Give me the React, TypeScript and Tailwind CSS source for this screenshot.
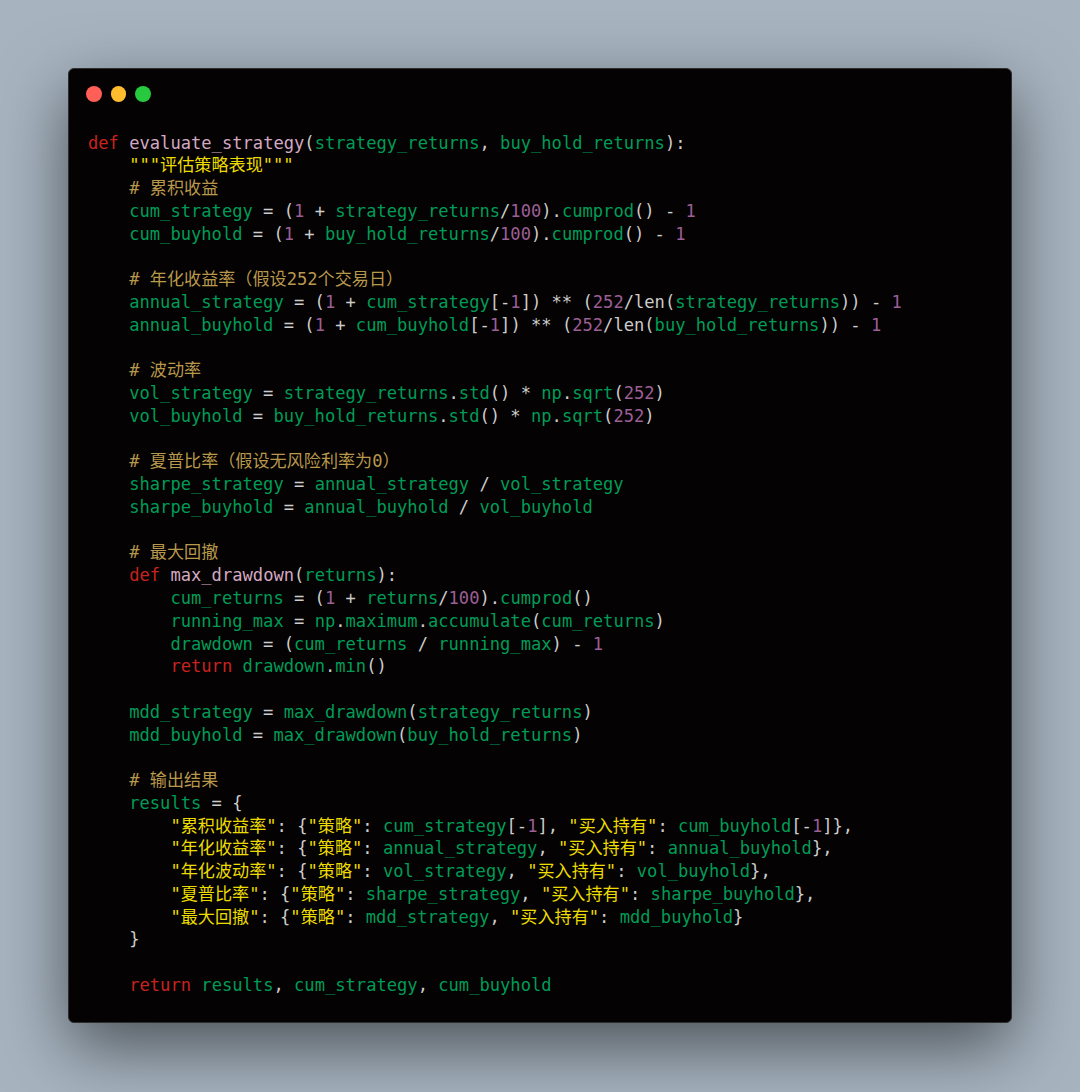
type K = "k" | "f" | "g" | "n" | "c" | "s" | "p";
type Tok = [K, string];

const cls: Record<K, string> = {
  k: "text-[#c8221f]",
  f: "text-[#d4a9c2]",
  g: "text-[#009c57]",
  n: "text-[#9c5f96]",
  c: "text-[#b8984c]",
  s: "text-[#ecdc00]",
  p: "text-[#cccccc]",
};

const lines: Tok[][] = [
  [["k","def"],["p"," "],["f","evaluate_strategy"],["p","("],["g","strategy_returns"],["p",", "],["g","buy_hold_returns"],["p","):"]],
  [["p","    "],["s","\"\"\"评估策略表现\"\"\""]],
  [["p","    "],["c","# 累积收益"]],
  [["p","    "],["g","cum_strategy"],["p"," = ("],["n","1"],["p"," + "],["g","strategy_returns"],["p","/"],["n","100"],["p",")."],["g","cumprod"],["p","() - "],["n","1"]],
  [["p","    "],["g","cum_buyhold"],["p"," = ("],["n","1"],["p"," + "],["g","buy_hold_returns"],["p","/"],["n","100"],["p",")."],["g","cumprod"],["p","() - "],["n","1"]],
  [],
  [["p","    "],["c","# 年化收益率（假设252个交易日）"]],
  [["p","    "],["g","annual_strategy"],["p"," = ("],["n","1"],["p"," + "],["g","cum_strategy"],["p","[-"],["n","1"],["p","]) ** ("],["n","252"],["p","/len("],["g","strategy_returns"],["p",")) - "],["n","1"]],
  [["p","    "],["g","annual_buyhold"],["p"," = ("],["n","1"],["p"," + "],["g","cum_buyhold"],["p","[-"],["n","1"],["p","]) ** ("],["n","252"],["p","/len("],["g","buy_hold_returns"],["p",")) - "],["n","1"]],
  [],
  [["p","    "],["c","# 波动率"]],
  [["p","    "],["g","vol_strategy"],["p"," = "],["g","strategy_returns"],["p","."],["g","std"],["p","() * "],["g","np"],["p","."],["g","sqrt"],["p","("],["n","252"],["p",")"]],
  [["p","    "],["g","vol_buyhold"],["p"," = "],["g","buy_hold_returns"],["p","."],["g","std"],["p","() * "],["g","np"],["p","."],["g","sqrt"],["p","("],["n","252"],["p",")"]],
  [],
  [["p","    "],["c","# 夏普比率（假设无风险利率为0）"]],
  [["p","    "],["g","sharpe_strategy"],["p"," = "],["g","annual_strategy"],["p"," / "],["g","vol_strategy"]],
  [["p","    "],["g","sharpe_buyhold"],["p"," = "],["g","annual_buyhold"],["p"," / "],["g","vol_buyhold"]],
  [],
  [["p","    "],["c","# 最大回撤"]],
  [["p","    "],["k","def"],["p"," "],["f","max_drawdown"],["p","("],["g","returns"],["p","):"]],
  [["p","        "],["g","cum_returns"],["p"," = ("],["n","1"],["p"," + "],["g","returns"],["p","/"],["n","100"],["p",")."],["g","cumprod"],["p","()"]],
  [["p","        "],["g","running_max"],["p"," = "],["g","np"],["p","."],["g","maximum"],["p","."],["g","accumulate"],["p","("],["g","cum_returns"],["p",")"]],
  [["p","        "],["g","drawdown"],["p"," = ("],["g","cum_returns"],["p"," / "],["g","running_max"],["p",") - "],["n","1"]],
  [["p","        "],["k","return"],["p"," "],["g","drawdown"],["p","."],["g","min"],["p","()"]],
  [],
  [["p","    "],["g","mdd_strategy"],["p"," = "],["g","max_drawdown"],["p","("],["g","strategy_returns"],["p",")"]],
  [["p","    "],["g","mdd_buyhold"],["p"," = "],["g","max_drawdown"],["p","("],["g","buy_hold_returns"],["p",")"]],
  [],
  [["p","    "],["c","# 输出结果"]],
  [["p","    "],["g","results"],["p"," = {"]],
  [["p","        "],["s","\"累积收益率\""],["p",": {"],["s","\"策略\""],["p",": "],["g","cum_strategy"],["p","[-"],["n","1"],["p","], "],["s","\"买入持有\""],["p",": "],["g","cum_buyhold"],["p","[-"],["n","1"],["p","]},"]],
  [["p","        "],["s","\"年化收益率\""],["p",": {"],["s","\"策略\""],["p",": "],["g","annual_strategy"],["p",", "],["s","\"买入持有\""],["p",": "],["g","annual_buyhold"],["p","},"]],
  [["p","        "],["s","\"年化波动率\""],["p",": {"],["s","\"策略\""],["p",": "],["g","vol_strategy"],["p",", "],["s","\"买入持有\""],["p",": "],["g","vol_buyhold"],["p","},"]],
  [["p","        "],["s","\"夏普比率\""],["p",": {"],["s","\"策略\""],["p",": "],["g","sharpe_strategy"],["p",", "],["s","\"买入持有\""],["p",": "],["g","sharpe_buyhold"],["p","},"]],
  [["p","        "],["s","\"最大回撤\""],["p",": {"],["s","\"策略\""],["p",": "],["g","mdd_strategy"],["p",", "],["s","\"买入持有\""],["p",": "],["g","mdd_buyhold"],["p","}"]],
  [["p","    }"]],
  [],
  [["p","    "],["k","return"],["p"," "],["g","results"],["p",", "],["g","cum_strategy"],["p",", "],["g","cum_buyhold"]],
];

export default function App() {
  return (
    <div className="h-[1092px] w-full overflow-hidden bg-[#a7b4c0] pt-[68px] pl-[68px]">
      <div className="h-[955px] w-[944px] rounded-[6px] border border-[#2e2e2e] bg-[#040202] pt-[17px] pl-[17px] shadow-[0_24px_68px_rgba(0,0,0,0.55)]">
        <div className="flex gap-[9px]">
          <div className="h-[15.5px] w-[15.5px] rounded-full bg-[#ff5f56]" />
          <div className="h-[15.5px] w-[15.5px] rounded-full bg-[#ffbd2e]" />
          <div className="h-[15.5px] w-[15.5px] rounded-full bg-[#27c93f]" />
        </div>
        <div className="mt-[30.2px] pl-[2px] font-['DejaVu_Sans_Mono','Noto_Sans_CJK_SC',monospace] text-[17.12px]">
          {lines.map((line, i) => (
            <div key={i} className="h-[22.77px] leading-[22.77px] whitespace-pre">
              {line.map(([k, t], j) => (
                <span key={j} className={cls[k]}>{t}</span>
              ))}
            </div>
          ))}
        </div>
      </div>
    </div>
  );
}
